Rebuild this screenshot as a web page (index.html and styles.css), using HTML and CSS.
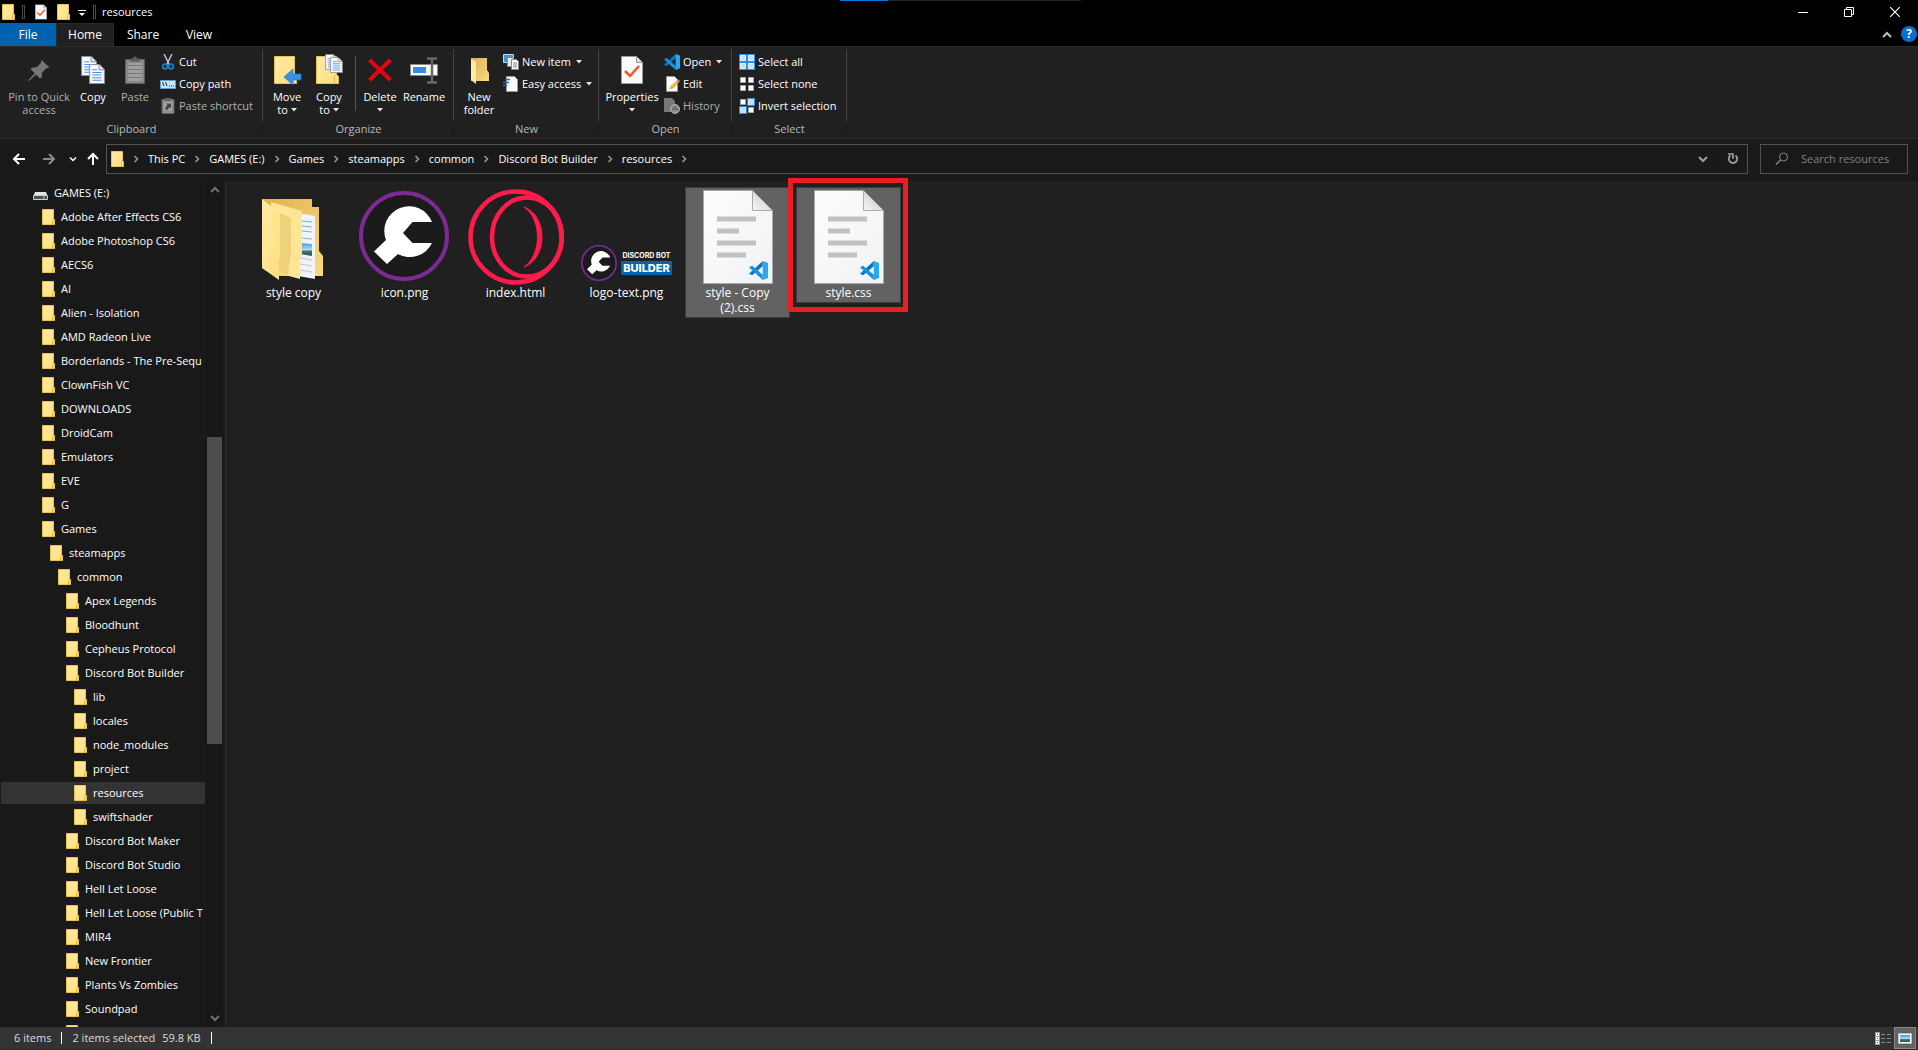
FILE: index.html
```html
<!DOCTYPE html>
<html lang="en">
<head>
<meta charset="utf-8">
<title>resources</title>
<link rel="stylesheet" href="styles.css">
</head>
<body>
<svg class="defs" aria-hidden="true">
  <defs>
    <linearGradient id="fold" x1="0" y1="0" x2="1" y2="1"><stop offset="0" stop-color="#ffeaa6"/><stop offset="1" stop-color="#ffdf7d"/></linearGradient>
    <linearGradient id="foldB" x1="0" y1="0" x2="1" y2="1"><stop offset="0" stop-color="#dfb04e"/><stop offset="1" stop-color="#f8dc82"/></linearGradient>
    <linearGradient id="sky" x1="0" y1="0" x2="0" y2="1"><stop offset="0" stop-color="#3f97e0"/><stop offset=".55" stop-color="#bfe0f5"/><stop offset=".6" stop-color="#4c7a50"/><stop offset="1" stop-color="#24557c"/></linearGradient>
    <linearGradient id="paper" x1="0" y1="0" x2="1" y2="1"><stop offset="0" stop-color="#fdfdfe"/><stop offset="1" stop-color="#f1f2f5"/></linearGradient>
    <linearGradient id="curl" x1="0" y1="1" x2="1" y2="0"><stop offset="0" stop-color="#f6f6f6"/><stop offset="1" stop-color="#c4c4c4"/></linearGradient>
    <symbol id="folder" viewBox="0 0 13 16"><path d="M.5.5h11v9l1 1v5H.5z" fill="url(#fold)" stroke="#eac351"/><path d="M10.500 15.500v-4l1-1.500 1 1v4.500z" fill="#ffe9a0" stroke="#e3b641"/></symbol>
    <symbol id="bigfolder" viewBox="0 0 23 28"><path d="M.5.5h20v18l2 2v7H.5z" fill="url(#fold)" stroke="#eac351"/><path d="M18.500 27.500v-7l2-2 2 2v7z" fill="#ffe391" stroke="#e3b641"/><path d="M3 2v25" stroke="#fff0bd"/></symbol>
    <symbol id="page" viewBox="0 0 15 19"><path d="M.5.5h9l5 5v13H.5z" fill="#fafbfd" stroke="#8d9196"/><path d="M9.500.5v5h5" fill="#e5e7ea" stroke="#8d9196"/><path d="M3 5.500h5M3 8h9M3 10.500h9M3 13h9M3 15.500h9" stroke="#4d90e8"/></symbol>
    <symbol id="caret" viewBox="0 0 6 4"><path d="M0 0h6L3 3.500z" fill="#e4e4e4"/></symbol>
    <symbol id="crumb" viewBox="0 0 6 8"><path d="M1.500 1l3 3-3 3" fill="none" stroke="#9a9a9a" stroke-width="1.500"/></symbol>
    <symbol id="down" viewBox="0 0 10 8"><path d="M1 2l4 4 4-4" fill="none" stroke="currentColor" stroke-width="2"/></symbol>
    <symbol id="up" viewBox="0 0 10 8"><path d="M1 6l4-4 4 4" fill="none" stroke="currentColor" stroke-width="2"/></symbol>
    <symbol id="vscode" viewBox="0 0 18 18"><path d="M13 0v5L3 13.500 0 12z" fill="#0a76bf"/><path d="M13 18v-5L3 4.500 0 6z" fill="#1593dc"/><path d="M13 0l5 2v14l-5 2z" fill="#2aa8f2"/></symbol>
    <symbol id="wrench" viewBox="0 0 90 90"><circle cx="45" cy="45" r="43" fill="#1b1b1b" stroke="#7d2a95" stroke-width="4"/><path d="M73 31H53.500L44 42l9.500 10H73A24.500 24.500 0 0 1 39 63L28 73 15 60.500 27 49A24.500 24.500 0 1 1 73 31z" fill="#fff"/></symbol>
    <symbol id="doc" viewBox="0 0 70 94"><path d="M.5.5h49l20 20v73H.5z" fill="url(#paper)" stroke="#aaa"/><path d="M49.500.5v20h20z" fill="url(#curl)" stroke="#aaa"/><path d="M14 29h39M14 41h22M14 53h39M14 65h29" stroke="#c0c2c2" stroke-width="5"/><g transform="translate(46 71) scale(1.060)"><path d="M13 0v5L3 13.500 0 12z" fill="#0a76bf"/><path d="M13 18v-5L3 4.500 0 6z" fill="#1593dc"/><path d="M13 0l5 2v14l-5 2z" fill="#2aa8f2"/></g></symbol>
    <symbol id="checkdoc" viewBox="0 0 22 28"><path d="M.5.5h15l6 6v21H.5z" fill="#fafafa" stroke="#999"/><path d="M15.500.5v6h6" fill="#ddd" stroke="#999"/><path d="M4 15l5 5 9-10" fill="none" stroke="#f2591d" stroke-width="2.500"/></symbol>
    <symbol id="sqW" viewBox="0 0 6 6"><path d="M.5.5h5v5h-5z" fill="#fff" stroke="#aaa"/></symbol>
  </defs>
</svg>

<div class="window">
  <header class="titlebar">
    <svg class="i13" viewBox="0 0 13 16"><use href="#folder"/></svg>
    <span class="grip"></span>
    <button class="qat" aria-label="Properties"><svg width="12" height="16" viewBox="0 0 22 28"><use href="#checkdoc"/></svg></button>
    <button class="qat" aria-label="New folder"><svg class="i13" viewBox="0 0 13 16"><use href="#folder"/></svg></button>
    <button class="qat more" aria-label="Customize Quick Access Toolbar"><svg width="8" height="7" viewBox="0 0 8 7"><path d="M0 .5h8" stroke="#fff"/><path d="M1 3h6L4 6z" fill="#fff"/></svg></button>
    <span class="grip second"></span>
    <h1>resources</h1>
    <span class="progress"></span>
    <div class="winbtns">
      <button aria-label="Minimize"><svg width="10" height="10"><path d="M0 5.500h10" stroke="#fff"/></svg></button>
      <button aria-label="Restore"><svg width="10" height="10" viewBox="0 0 10 10"><path d="M.5 2.500h7v7h-7zM2.500 2.500v-2h7v7h-2" fill="none" stroke="#fff"/></svg></button>
      <button aria-label="Close"><svg width="10" height="10" viewBox="0 0 10 10"><path d="M0 0l10 10M10 0L0 10" stroke="#fff" stroke-width="1.200"/></svg></button>
    </div>
  </header>

  <nav class="tabs">
    <button class="tab file">File</button>
    <button class="tab home">Home</button>
    <button class="tab share">Share</button>
    <button class="tab view">View</button>
    <button class="collapse" aria-label="Minimize the Ribbon"><svg width="10" height="8"><use href="#up"/></svg></button>
    <button class="help" aria-label="Help">?</button>
  </nav>

  <section class="ribbon">
    <div class="group clip">
      <div class="tools">
        <button class="big w70 dim"><svg width="22" height="28" viewBox="0 0 22 28"><path d="M13.500 4l8 7.500-2.500.7-1 .2-4 4.300-.3 4.800-1.700 1-4-4-7 6.500-.8-.8 6.500-7-4-4 1-1.500 5-.5 4-4 .2-1z" fill="#757575"/></svg><span>Pin to Quick<br>access</span></button>
        <button class="big w38"><svg width="24" height="28" viewBox="0 0 24 28"><use href="#page" width="16" height="20"/><use href="#page" x="8" y="8" width="16" height="20"/></svg><span>Copy</span></button>
        <button class="big w46 dim"><svg width="20" height="28" viewBox="0 0 20 28"><path d="M.5 3.500h19v24H.5z" fill="#888" stroke="#5d5d5d"/><path d="M3 7v18h14V7" fill="#a0a0a0"/><path d="M3 9.500h14M3 13.500h14M3 17.500h14M3 21.500h14" stroke="#777"/><path d="M5 5.500V2.500h3a2 2 0 0 1 4 0h3v3z" fill="#5d5d5d"/></svg><span>Paste</span></button>
        <div class="list">
          <button><svg width="16" height="16" viewBox="0 0 16 16"><path d="M4 0l5.500 11M12 0L6.500 11" stroke="#bcc3ca" stroke-width="1.500"/><circle cx="5" cy="12.500" r="2.300" fill="none" stroke="#1b7fc4" stroke-width="1.800"/><circle cx="11" cy="12.500" r="2.300" fill="none" stroke="#1b7fc4" stroke-width="1.800"/></svg>Cut</button>
          <button><svg width="16" height="16" viewBox="0 0 16 16"><path d="M.5 4.500h15v8H.5z" fill="#c9e6fa" stroke="#5aa3d8"/><path d="M2.500 6l1.500 4M5.500 6L7 10M9 10h1M11 10h1M13 10h1" stroke="#223"/></svg>Copy path</button>
          <button class="dim"><svg width="16" height="16" viewBox="0 0 16 16"><path d="M2 1.500h12v14H2z" fill="#8c8c8c" stroke="#666"/><path d="M5 0h6v3H5z" fill="#666"/><path d="M4 4h8v9H4z" fill="#a5a5a5"/><path d="M5.500 12V9l2-2L6 5.500h5v5L9.500 9l-2 3z" fill="#444"/></svg>Paste shortcut</button>
        </div>
      </div>
      <h2>Clipboard</h2>
    </div>
    <div class="group org">
      <div class="tools">
        <button class="big w42"><svg width="28" height="28" viewBox="0 0 28 28"><use href="#bigfolder" x="1" width="23" height="28"/><path d="M11 21l9-8v5h8v6h-8v5z" fill="#3794e6" stroke="#2277c6" stroke-width=".7"/></svg><span>Move<br>to <svg class="caret"><use href="#caret"/></svg></span></button>
        <button class="big w42"><svg width="28" height="28" viewBox="0 2 28 28"><use href="#bigfolder" x="1" y="2" width="23" height="28"/><use href="#page" x="10" width="13" height="16"/><use href="#page" x="15" y="3" width="13" height="16"/></svg><span>Copy<br>to <svg class="caret"><use href="#caret"/></svg></span></button>
        <span class="rule"></span>
        <button class="big w40"><svg width="24" height="28" viewBox="0 0 24 28"><path d="M1.500 4l21 20M22.500 4l-21 20" stroke="#e30613" stroke-width="4"/></svg><span>Delete<br><svg class="caret"><use href="#caret"/></svg></span></button>
        <button class="big w48"><svg width="28" height="28" viewBox="0 0 28 28"><path d="M.5 8.500h27v11H.5z" fill="#fafafa" stroke="#888"/><path d="M3 11h13v6H3z" fill="#2c8fea"/><path d="M17 2.500h4l1 1.500 1-1.500h4M22 3v22M17 26.500h4l1-1.500 1 1.500h4" fill="none" stroke="#666" stroke-width="2.500"/></svg><span>Rename</span></button>
      </div>
      <h2>Organize</h2>
    </div>
    <div class="group new">
      <div class="tools">
        <button class="big w44"><svg width="19" height="28" viewBox="0 0 19 28"><path d="M1 2h16v12l2 3v8H1z" fill="url(#foldB)"/><path d="M1 3l5 3v22l-5-4z" fill="#ffeaa3"/></svg><span>New<br>folder</span></button>
        <div class="list">
          <button><svg width="16" height="16" viewBox="0 0 16 16"><path d="M.5.5h10v8H.5z" fill="#4893bd" stroke="#b8dff0"/><path d="M4.500 3.500h6v9h-6z" fill="#ececec" stroke="#888"/><path d="M8.500 5.500h5l2 2v8h-7z" fill="#fff" stroke="#888"/><path d="M10 9h4M10 11h4M10 13h4" stroke="#b56e68"/></svg>New item <svg class="caret"><use href="#caret"/></svg></button>
          <button><svg width="16" height="16" viewBox="0 0 16 16"><path d="M3.500.5h8l3 3v12h-11z" fill="#fafafa" stroke="#999"/><path d="M2 3.500h5M0 6.500h6M0 9.500h4" stroke="#1b6fb8" stroke-width="1.300"/></svg>Easy access <svg class="caret"><use href="#caret"/></svg></button>
        </div>
      </div>
      <h2>New</h2>
    </div>
    <div class="group open">
      <div class="tools">
        <button class="big w60"><svg width="22" height="28"><use href="#checkdoc"/></svg><span>Properties<br><svg class="caret"><use href="#caret"/></svg></span></button>
        <div class="list">
          <button><svg width="16" height="16"><use href="#vscode"/></svg>Open <svg class="caret"><use href="#caret"/></svg></button>
          <button><svg width="16" height="16" viewBox="0 0 16 16"><path d="M2.500.5h8l3 3v12h-11z" fill="#fafafa" stroke="#999"/><path d="M6 13l1-3 7-6 1.500 1.500L9 12z" fill="#f0bd32" stroke="#c28f1d" stroke-width=".5"/><path d="M13 5l2-1.500 1 1-2 2z" fill="#d8605b"/></svg>Edit</button>
          <button class="dim"><svg width="16" height="16" viewBox="0 0 16 16"><path d="M0 0h8l3 3v11H0z" fill="#777"/><circle cx="11" cy="11" r="4.500" fill="#8f8f8f" stroke="#b0b0b0"/><path d="M11 8v3l3 1M8 11h2" fill="none" stroke="#444"/></svg>History</button>
        </div>
      </div>
      <h2>Open</h2>
    </div>
    <div class="group sel">
      <div class="tools">
        <div class="list">
          <button><svg width="16" height="16" viewBox="0 0 16 16"><path d="M0 0h16v16H0z" fill="#2e8fe8"/><path d="M1.500 1.500h5v5h-5zM9.500 1.500h5v5h-5zM1.500 9.500h5v5h-5zM9.500 9.500h5v5h-5z" fill="#bfe1fb" stroke="#e8f4fd"/></svg>Select all</button>
          <button><svg width="16" height="16" viewBox="0 0 16 16"><use href="#sqW" x="1" y="1" width="6" height="6"/><use href="#sqW" x="9" y="1" width="6" height="6"/><use href="#sqW" x="1" y="9" width="6" height="6"/><use href="#sqW" x="9" y="9" width="6" height="6"/></svg>Select none</button>
          <button><svg width="16" height="16" viewBox="0 0 16 16"><path d="M8.500.5h7v7h-7zM.5 8.500h7v7h-7z" fill="#bfe1fb" stroke="#2e8fe8"/><use href="#sqW" x="1" y="1" width="6" height="6"/><use href="#sqW" x="9" y="9" width="6" height="6"/></svg>Invert selection</button>
        </div>
      </div>
      <h2>Select</h2>
    </div>
  </section>

  <div class="addressrow">
    <div class="navbtns">
      <button aria-label="Back"><svg width="14" height="12" viewBox="0 0 14 12"><path d="M13 6H2M7 1L2 6l5 5" fill="none" stroke="#fff" stroke-width="2"/></svg></button>
      <button aria-label="Forward"><svg width="14" height="12" viewBox="0 0 14 12"><path d="M1 6h11M7 1l5 5-5 5" fill="none" stroke="#8b8b8b" stroke-width="2"/></svg></button>
      <button class="recent" aria-label="Recent locations"><svg width="8" height="6"><use href="#down"/></svg></button>
      <button class="upbtn" aria-label="Up"><svg width="12" height="14" viewBox="0 0 12 14"><path d="M6 13V2M1 7l5-5 5 5" fill="none" stroke="#fff" stroke-width="2"/></svg></button>
    </div>
    <div class="address">
      <svg class="i13" viewBox="0 0 13 16"><use href="#folder"/></svg>
      <svg class="sep"><use href="#crumb"/></svg><a href="#">This PC</a>
      <svg class="sep"><use href="#crumb"/></svg><a href="#">GAMES (E:)</a>
      <svg class="sep"><use href="#crumb"/></svg><a href="#">Games</a>
      <svg class="sep"><use href="#crumb"/></svg><a href="#">steamapps</a>
      <svg class="sep"><use href="#crumb"/></svg><a href="#">common</a>
      <svg class="sep"><use href="#crumb"/></svg><a href="#">Discord Bot Builder</a>
      <svg class="sep"><use href="#crumb"/></svg><a href="#">resources</a>
      <svg class="sep"><use href="#crumb"/></svg>
      <button class="drop" aria-label="Previous locations"><svg width="10" height="8"><use href="#down"/></svg></button>
      <button class="refresh" aria-label="Refresh"><svg width="12" height="12" viewBox="0 0 12 12"><path d="M8.500 2.500a4.200 4.200 0 1 1-5 0" fill="none" stroke="#a0a0a0" stroke-width="1.800"/><path d="M1 1h5v5" fill="none" stroke="#a0a0a0" stroke-width="1.600"/></svg></button>
    </div>
    <label class="search">
      <svg width="14" height="14" viewBox="0 0 14 14"><circle cx="8.500" cy="5" r="4" fill="none" stroke="#8a8a8a"/><path d="M5.500 8L1 12.500" stroke="#8a8a8a" stroke-width="1.300"/></svg>
      <input type="text" placeholder="Search resources" aria-label="Search resources">
    </label>
  </div>

  <div class="content">
    <nav class="sidebar">
      <ul class="tree">
        <li class="l0"><a href="#"><svg width="15" height="16" viewBox="0 0 15 16"><path d="M2 7h11l1.500 4H.5z" fill="#e3e5e8"/><path d="M.5 10.500h14v4H.5z" fill="#4e5256" stroke="#c9ccd0"/><circle cx="11" cy="12.500" r="1" fill="#4cf04c"/></svg>GAMES (E:)</a></li>
        <li class="l1"><a href="#"><svg class="i13"><use href="#folder"/></svg>Adobe After Effects CS6</a></li>
        <li class="l1"><a href="#"><svg class="i13"><use href="#folder"/></svg>Adobe Photoshop CS6</a></li>
        <li class="l1"><a href="#"><svg class="i13"><use href="#folder"/></svg>AECS6</a></li>
        <li class="l1"><a href="#"><svg class="i13"><use href="#folder"/></svg>AI</a></li>
        <li class="l1"><a href="#"><svg class="i13"><use href="#folder"/></svg>Alien - Isolation</a></li>
        <li class="l1"><a href="#"><svg class="i13"><use href="#folder"/></svg>AMD Radeon Live</a></li>
        <li class="l1"><a href="#"><svg class="i13"><use href="#folder"/></svg>Borderlands - The Pre-Sequ</a></li>
        <li class="l1"><a href="#"><svg class="i13"><use href="#folder"/></svg>ClownFish VC</a></li>
        <li class="l1"><a href="#"><svg class="i13"><use href="#folder"/></svg>DOWNLOADS</a></li>
        <li class="l1"><a href="#"><svg class="i13"><use href="#folder"/></svg>DroidCam</a></li>
        <li class="l1"><a href="#"><svg class="i13"><use href="#folder"/></svg>Emulators</a></li>
        <li class="l1"><a href="#"><svg class="i13"><use href="#folder"/></svg>EVE</a></li>
        <li class="l1"><a href="#"><svg class="i13"><use href="#folder"/></svg>G</a></li>
        <li class="l1"><a href="#"><svg class="i13"><use href="#folder"/></svg>Games</a></li>
        <li class="l2"><a href="#"><svg class="i13"><use href="#folder"/></svg>steamapps</a></li>
        <li class="l3"><a href="#"><svg class="i13"><use href="#folder"/></svg>common</a></li>
        <li class="l4"><a href="#"><svg class="i13"><use href="#folder"/></svg>Apex Legends</a></li>
        <li class="l4"><a href="#"><svg class="i13"><use href="#folder"/></svg>Bloodhunt</a></li>
        <li class="l4"><a href="#"><svg class="i13"><use href="#folder"/></svg>Cepheus Protocol</a></li>
        <li class="l4"><a href="#"><svg class="i13"><use href="#folder"/></svg>Discord Bot Builder</a></li>
        <li class="l5"><a href="#"><svg class="i13"><use href="#folder"/></svg>lib</a></li>
        <li class="l5"><a href="#"><svg class="i13"><use href="#folder"/></svg>locales</a></li>
        <li class="l5"><a href="#"><svg class="i13"><use href="#folder"/></svg>node_modules</a></li>
        <li class="l5"><a href="#"><svg class="i13"><use href="#folder"/></svg>project</a></li>
        <li class="l5 current"><a href="#"><svg class="i13"><use href="#folder"/></svg>resources</a></li>
        <li class="l5"><a href="#"><svg class="i13"><use href="#folder"/></svg>swiftshader</a></li>
        <li class="l4"><a href="#"><svg class="i13"><use href="#folder"/></svg>Discord Bot Maker</a></li>
        <li class="l4"><a href="#"><svg class="i13"><use href="#folder"/></svg>Discord Bot Studio</a></li>
        <li class="l4"><a href="#"><svg class="i13"><use href="#folder"/></svg>Hell Let Loose</a></li>
        <li class="l4"><a href="#"><svg class="i13"><use href="#folder"/></svg>Hell Let Loose (Public T</a></li>
        <li class="l4"><a href="#"><svg class="i13"><use href="#folder"/></svg>MIR4</a></li>
        <li class="l4"><a href="#"><svg class="i13"><use href="#folder"/></svg>New Frontier</a></li>
        <li class="l4"><a href="#"><svg class="i13"><use href="#folder"/></svg>Plants Vs Zombies</a></li>
        <li class="l4"><a href="#"><svg class="i13"><use href="#folder"/></svg>Soundpad</a></li>
        <li class="l4"><a href="#"><svg class="i13"><use href="#folder"/></svg></a></li>
      </ul>
      <div class="scrollbar">
        <svg width="10" height="8"><use href="#up"/></svg>
        <div class="track"><span class="before"></span><span class="thumb"></span><span class="after"></span></div>
        <svg width="10" height="8"><use href="#down"/></svg>
      </div>
    </nav>

    <main class="files">
      <button class="item">
        <span class="thumbbox"><svg width="72" height="96" viewBox="0 0 72 96"><path d="M45 86l23-4-12 9z" fill="#181818"/><path d="M4 10h50v8h7v44l4 5v20H20z" fill="url(#foldB)"/><path d="M40 24l17 3v63l-17-3z" fill="#f2f3f6"/><path d="M44 32l10 1M44 37l10 1M44 42l10 1M44 49l10 1" stroke="#6fb4e0"/><path d="M42 54l12 1v12l-12-2z" fill="url(#sky)"/><path d="M42 69l12 2M42 75l12 2M42 81l12 2" stroke="#c5c5c5"/><path d="M13 13l31 9v45l-2 2v21l-26-7z" fill="#ffe596"/><path d="M22 24l11 5v35l-3 22-9-3z" fill="#eed27a"/><path d="M4 10l18 14v44l-1 1v22L4 79z" fill="url(#fold)"/></svg></span>
        <span class="name">style copy</span>
      </button>
      <button class="item">
        <span class="thumbbox"><svg width="92" height="94" viewBox="0 -2 92 94"><use href="#wrench" width="90" height="90"/></svg></span>
        <span class="name">icon.png</span>
      </button>
      <button class="item">
        <span class="thumbbox"><svg width="96" height="96" viewBox="0 0 96 96"><circle cx="48" cy="48" r="45.500" fill="none" stroke="#ff1b4b" stroke-width="4.500"/><ellipse cx="59" cy="48" rx="35" ry="39.500" fill="none" stroke="#ff1b4b" stroke-width="4.500"/><path d="M56 18C80 27 80 69 56 78C74 66 74 30 56 18z" fill="#ff1b4b" stroke="#ff1b4b"/></svg></span>
        <span class="name">index.html</span>
      </button>
      <button class="item">
        <span class="thumbbox low"><span class="brand"><svg width="36" height="36"><use href="#wrench"/></svg><span class="brandtext"><span class="b1">DISCORD BOT</span><span class="b2">BUILDER</span></span></span></span>
        <span class="name">logo-text.png</span>
      </button>
      <button class="item picked">
        <span class="thumbbox"><svg width="70" height="94"><use href="#doc"/></svg></span>
        <span class="name">style - Copy (2).css</span>
      </button>
      <button class="item picked marked">
        <span class="thumbbox"><svg width="70" height="94"><use href="#doc"/></svg></span>
        <span class="name">style.css</span>
      </button>
    </main>
  </div>

  <footer class="status">
    <span>6 items</span><i></i><span>2 items selected</span><span class="size">59.8 KB</span><i></i>
    <div class="views">
      <button aria-label="Details view"><svg width="16" height="13" viewBox="0 0 16 13"><path d="M0 0h5v13H0z" fill="#999"/><path d="M1 1h3v3H1zM1 5h3v3H1zM1 9h3v3H1z" fill="#fff"/><path d="M2 2.500h1M2 6.500h1M2 10.500h1" stroke="#345"/><path d="M6 2.500h4M12 2.500h4M6 6.500h4M12 6.500h4M6 10.500h4M12 10.500h4" stroke="#888"/></svg></button>
      <button class="on" aria-label="Large icons view"><svg width="14" height="11" viewBox="0 0 14 11"><path d="M.5.5h13v10H.5z" fill="#fff" stroke="#bbb"/><path d="M2 2h10v7H2z" fill="url(#sky)"/></svg></button>
    </div>
  </footer>
</div>
</body>
</html>
```
FILE: styles.css
```css
* { box-sizing: border-box; }
body { margin: 0; background: #202020; color: #fff; font: 11px/16px "Open Sans", "Noto Sans", sans-serif; }
button { font: inherit; color: inherit; background: none; border: 0; padding: 0; margin: 0; }
a { color: inherit; text-decoration: none; }
h1, h2 { margin: 0; font-size: 11px; font-weight: 400; }
svg { flex: none; display: block; }
.defs { position: absolute; width: 0; height: 0; }
.i13 { width: 13px; height: 16px; }

.window { display: flex; flex-direction: column; height: 100vh; }

/* title bar */
.titlebar { display: flex; align-items: center; height: 23px; background: #000; padding-left: 2px; position: relative; }
.grip { width: 3px; height: 14px; border: 1px solid #4a4a4a; margin: 0 10px 0 7px; }
.grip.second { margin: 0 6px 0 7px; }
.qat { margin-right: 10px; }
.qat.more { margin: 3px 0 0 -2px; }
.titlebar h1 { line-height: 22px; }
.progress { position: absolute; top: 0; left: 840px; width: 241px; height: 1px; background: linear-gradient(90deg, #0078d7 20%, #222 20%); }
.winbtns { margin-left: auto; display: flex; height: 21px; }
.winbtns button { width: 46px; display: flex; align-items: center; justify-content: center; }

/* tabs */
.tabs { display: flex; height: 23px; background: #000; font-size: 12px; line-height: 23px; }
.tab { height: 23px; }
.file { width: 56px; background: #0063b1; }
.home { width: 58px; background: #202020; border: 1px solid #2b2b2b; border-bottom: 0; line-height: 22px; }
.share { width: 58px; }
.view { width: 54px; }
.collapse { margin-left: auto; color: #c0c0c0; }
.help { width: 16px; height: 16px; border-radius: 8px; background: #0a6cd0; font-weight: 700; line-height: 16px; margin: 3px 1px 0 9px; }

/* ribbon */
.ribbon { display: flex; height: 93px; background: #202020; border-top: 1px solid #2b2b2b; border-bottom: 1px solid #2b2b2b; }
.group { display: flex; flex-direction: column; padding-top: 9px; background: linear-gradient(#444 72px, #191919 72px) right 2px / 1px 86px no-repeat; }
.clip { width: 263px; }
.org { width: 191px; }
.new { width: 145px; }
.open { width: 133px; }
.sel { width: 115px; }
.tools { display: flex; height: 65px; padding-left: 3px; }
.clip .tools { padding-left: 4px; }
.sel .tools { padding-left: 5px; }
.group h2 { text-align: center; color: #b8b8b8; line-height: 19px; }
.big { display: flex; flex-direction: column; align-items: center; line-height: 13px; white-space: nowrap; }
.big > svg { height: 28px; margin-bottom: 6px; overflow: visible; }
.big .caret { display: inline-block; }
.caret { width: 6px; height: 4px; vertical-align: 2px; }
.dim { color: #b0b0b0; }
.w38 { width: 38px; }
.w40 { width: 40px; }
.w42 { width: 42px; }
.w44 { width: 44px; }
.w46 { width: 46px; }
.w48 { width: 48px; }
.w60 { width: 60px; }
.w70 { width: 70px; }
.rule { width: 1px; height: 55px; background: #555; margin: 0 4px 0 5px; }
.list { margin: -5px 0 0 2px; }
.list button { display: flex; align-items: center; gap: 3px; height: 22px; white-space: nowrap; }
.list .caret { margin-left: 2px; }

/* address row */
.addressrow { display: flex; height: 42px; background: #191919; padding: 5px 10px 0 0; }
.navbtns { display: flex; width: 106px; padding-left: 12px; gap: 16px; height: 30px; align-items: center; }
.recent { margin-left: -3px; }
.upbtn { margin-left: -6px; }
.address, .search { display: flex; align-items: center; height: 30px; border: 1px solid #535353; }
.address { flex: 1; padding-left: 4px; }
.sep { width: 6px; height: 8px; margin: 0 9px; }
.drop { margin-left: auto; color: #a0a0a0; }
.refresh { width: 30px; height: 28px; display: flex; align-items: center; justify-content: center; border-left: 1px solid #141414; margin-left: 9px; }
.search { width: 148px; margin-left: 12px; padding-left: 14px; }
.search input { flex: 1; min-width: 0; margin-left: 12px; padding: 0; border: 0; outline: 0; background: none; color: #fff; font: inherit; }
.search input::placeholder { color: #808080; opacity: 1; }

/* content */
.content { flex: 1; min-height: 0; display: flex; }
.sidebar { width: 226px; display: flex; background: #191919; border-right: 1px solid #2b2b2b; }
.tree { list-style: none; margin: 0; padding: 0; width: 206px; overflow: hidden; }
.tree li { height: 24px; padding: 1px; }
.tree a { display: flex; align-items: center; gap: 6px; height: 22px; white-space: nowrap; }
.l0 a { padding-left: 32px; }
.l1 a { padding-left: 41px; }
.l2 a { padding-left: 49px; }
.l3 a { padding-left: 57px; }
.l4 a { padding-left: 65px; }
.l5 a { padding-left: 73px; }
.current a { background: #333; }
.scrollbar { width: 17px; background: #171717; color: #707070; display: flex; flex-direction: column; align-items: center; padding: 5px 0; }
.track { flex: 1; width: 100%; display: flex; flex-direction: column; padding-right: 1px; }
.before { flex: 243; }
.thumb { flex: 307; background: #4d4d4d; margin-left: 1px; }
.after { flex: 270; }

.files { flex: 1; display: flex; flex-wrap: wrap; align-items: flex-start; align-content: flex-start; gap: 6px; padding: 6px 15px; }
.item { width: 105px; border: 1px solid transparent; padding: 1px 4px 2px; font-size: 12px; line-height: 15px; position: relative; }
.thumbbox { display: flex; height: 96px; justify-content: center; align-items: flex-start; }
.picked .thumbbox { padding-top: 1px; }
.low { align-items: flex-end; padding-bottom: 4px; }
.name { display: block; padding: 0 4px; }
.picked { background: #626262; border-color: #3c3c3c; }
.marked::after { content: ""; position: absolute; inset: -10px -8px -10px -9px; border: 5px solid #ed1c24; }
.brand { display: flex; align-items: center; gap: 4px; }
.brandtext { display: flex; flex-direction: column; gap: 1px; width: 51px; font-family: Inter, sans-serif; font-weight: 700; white-space: nowrap; text-align: center; }
.b1 { font-size: 7px; line-height: 9px; }
.b2 { font-size: 11px; font-weight: 800; line-height: 14px; background: #0465ac; border-radius: 1px; }

/* status bar */
.status { display: flex; align-items: center; height: 23px; background: #333; border-bottom: 1px solid #2e2628; padding-left: 14px; color: #dcdcdc; }
.status i { width: 1px; height: 12px; background: #fff; margin: 0 10px; }
.size { margin-left: 7px; }
.views { margin-left: auto; display: flex; height: 22px; }
.views button { width: 22px; display: flex; align-items: center; justify-content: center; }
.views .on { background: #626262; border: 1px solid #888; margin-right: 2px; }
```
